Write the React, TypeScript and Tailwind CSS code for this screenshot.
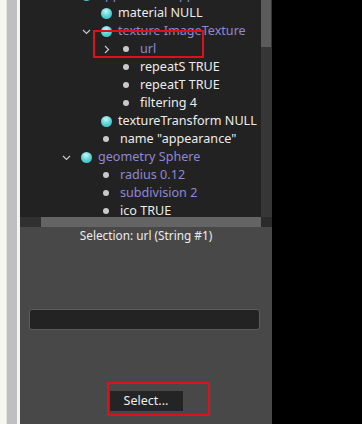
import React from "react";

type Node = {
  level: 0 | 1 | 2;
  text: string;
  kind: "big" | "small";
  purple?: boolean;
  chevron?: "down" | "right";
};

const rows: Node[] = [
  { level: 0, text: "appearance Appearance", kind: "big", purple: true, chevron: "down" },
  { level: 1, text: "material NULL", kind: "big" },
  { level: 1, text: "texture ImageTexture", kind: "big", purple: true, chevron: "down" },
  { level: 2, text: "url", kind: "small", purple: true, chevron: "right" },
  { level: 2, text: "repeatS TRUE", kind: "small" },
  { level: 2, text: "repeatT TRUE", kind: "small" },
  { level: 2, text: "filtering 4", kind: "small" },
  { level: 1, text: "textureTransform NULL", kind: "big" },
  { level: 1, text: 'name "appearance"', kind: "small" },
  { level: 0, text: "geometry Sphere", kind: "big", purple: true, chevron: "down" },
  { level: 1, text: "radius 0.12", kind: "small", purple: true },
  { level: 1, text: "subdivision 2", kind: "small", purple: true },
  { level: 1, text: "ico TRUE", kind: "small" },
];

const indent = {
  0: "pl-[36px]",
  1: "pl-[56px]",
  2: "pl-[76px]",
};

function Chevron({ dir }: { dir: "down" | "right" }) {
  return (
    <svg width="9" height="9" viewBox="0 0 9 9" className="text-[#c8c8c8]">
      {dir === "down" ? (
        <polyline points="1,3 4.5,6.5 8,3" fill="none" stroke="currentColor" strokeWidth="1.2" />
      ) : (
        <polyline points="3,1 6.5,4.5 3,8" fill="none" stroke="currentColor" strokeWidth="1.2" />
      )}
    </svg>
  );
}

function Row({ node }: { node: Node }) {
  return (
    <div className={`flex h-[18px] items-center ${indent[node.level]}`}>
      <div className="flex w-5 justify-center">{node.chevron && <Chevron dir={node.chevron} />}</div>
      <div className="flex w-5 justify-center">
        {node.kind === "big" ? (
          <div className="h-[11px] w-[11px] rounded-full bg-[radial-gradient(circle_at_45%_30%,#c4f7f5,#52d0d2_55%,#35b8bc)]" />
        ) : (
          <div className="h-[6px] w-[6px] rounded-full bg-[#c9c9c9]" />
        )}
      </div>
      <span
        className={`whitespace-nowrap text-[12.6px] ${node.kind === "big" ? "ml-[2px]" : "ml-[4px]"} ${
          node.purple ? "text-[#8f87d6]" : "text-[#ececec]"
        }`}
      >
        {node.text}
      </span>
    </div>
  );
}

export default function App() {
  return (
    <div className="flex h-[424px] w-[362px] overflow-hidden bg-black font-['Noto_Sans',sans-serif]">
      {/* left window edge */}
      <div className="w-[6px] bg-[#f7f7f1]" />
      <div className="w-[1px] bg-[#e3e3dc]" />
      <div className="w-[10px] bg-[#bfbfbf]" />
      <div className="w-[3px] bg-[#f4f4f4]" />

      <div className="flex w-[252px] flex-col">
        {/* tree */}
        <div className="flex h-[217px]">
          <div className="relative w-[241px] overflow-hidden bg-[#222222]">
            <div className="-mt-[14px]">
              {rows.map((r, i) => (
                <Row key={i} node={r} />
              ))}
            </div>
            <div className="absolute left-[73px] top-[30px] h-[28px] w-[111px] border-2 border-[#e0101a]" />
          </div>
          <div className="flex w-[11px] flex-col bg-[#363636]">
            <div className="h-[47px] w-[10px] bg-[#5b5b5b]" />
          </div>
        </div>
        <div className="flex h-[10px]">
          <div className="w-[21px] bg-[#303030]" />
          <div className="w-[220px] bg-[#646464]" />
          <div className="flex-1 bg-[#2b2b2b]" />
        </div>

        {/* lower panel */}
        <div className="relative flex flex-1 flex-col items-center bg-[#484848]">
          <div className="-mt-[1px] text-[11.8px] leading-[18px] text-[#ececec]">Selection: url (String #1)</div>
          <div className="ml-[9px] mt-[65px] h-[21px] w-[231px] self-start rounded-[3px] border border-[#5c5c5c] bg-[#232323]" />
          <button className="mt-[61px] h-[20px] w-[73px] bg-[#242424] text-[12.5px] text-[#ececec]">
            Select...
          </button>
          <div className="absolute left-[87px] top-[155px] h-[34px] w-[103px] border-2 border-[#e0101a]" />
        </div>
      </div>
    </div>
  );
}
